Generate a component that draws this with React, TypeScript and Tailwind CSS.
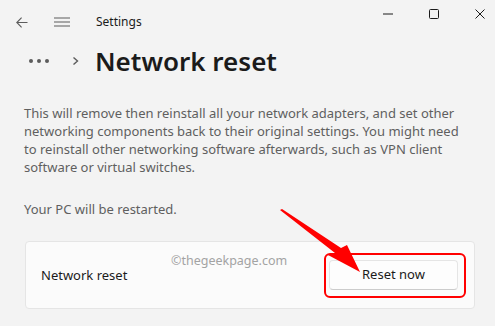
import React from "react";

export default function App() {
  return (
    <div
      className="relative w-[495px] h-[326px] overflow-hidden bg-[#f3f3f3] text-[#1b1b1b]"
      style={{ fontFamily: '"Segoe UI", "Noto Sans", sans-serif' }}
    >
      {/* title bar */}
      <div className="flex h-[44px] justify-between">
        <div className="flex items-center">
          <div className="ml-[16px] w-[12px] flex items-center">
            <svg width="12" height="11" viewBox="0 0 12 11" fill="none" stroke="#5c5c5c" strokeWidth="1.1">
              <path d="M11.5 5.5H0.8M5.6 0.6L0.8 5.5L5.6 10.4" />
            </svg>
          </div>
          <div className="ml-[26px] w-[16px]">
            <svg width="16" height="10" viewBox="0 0 16 10" fill="none" stroke="#5c5c5c" strokeWidth="1.1">
              <path d="M0 1H16M0 5H16M0 9H16" />
            </svg>
          </div>
          <span className="ml-[26px] text-[12px] text-[#1b1b1b]">Settings</span>
        </div>
        <div className="flex h-[28px] items-center mr-[-8px]">
          <div className="w-[46px] flex justify-center">
            <svg width="10" height="2" viewBox="0 0 10 2"><path d="M0 1H10" stroke="#1b1b1b" strokeWidth="1" /></svg>
          </div>
          <div className="w-[46px] flex justify-center">
            <svg width="10" height="10" viewBox="0 0 10 10" fill="none"><rect x="0.5" y="0.5" width="9" height="9" rx="1" stroke="#1b1b1b" strokeWidth="1" /></svg>
          </div>
          <div className="w-[46px] flex justify-center">
            <svg width="10" height="10" viewBox="0 0 10 10" fill="none"><path d="M0.5 0.5L9.5 9.5M9.5 0.5L0.5 9.5" stroke="#1b1b1b" strokeWidth="1" /></svg>
          </div>
        </div>
      </div>

      {/* breadcrumb */}
      <div className="flex items-center h-[36px] mt-[-1px]">
        <div className="ml-[29px] flex gap-[4px]">
          <span className="w-[4px] h-[4px] rounded-full bg-[#5c5c5c]" />
          <span className="w-[4px] h-[4px] rounded-full bg-[#5c5c5c]" />
          <span className="w-[4px] h-[4px] rounded-full bg-[#5c5c5c]" />
        </div>
        <svg className="ml-[23px]" width="7" height="8" viewBox="0 0 7 8" fill="none" stroke="#5c5c5c" strokeWidth="1.4">
          <path d="M1.5 0.5L5.5 4L1.5 7.5" />
        </svg>
        <h1 className="ml-[16px] text-[26px] font-semibold text-[#1b1b1b] leading-none">Network reset</h1>
      </div>

      {/* paragraph */}
      <div className="ml-[24px] mt-[25px] text-[13px] leading-[18px] text-[#5f5f5f]">
        <div>This will remove then reinstall all your network adapters, and set other</div>
        <div>networking components back to their original settings. You might need</div>
        <div>to reinstall other networking software afterwards, such as VPN client</div>
        <div>software or virtual switches.</div>
        <div className="mt-[24px]">Your PC will be restarted.</div>
      </div>

      {/* card */}
      <div className="relative ml-[25px] mt-[23px] w-[450px] h-[68px] rounded-[4px] border border-[#e5e5e5] bg-[#fbfbfb] flex items-center justify-between pl-[15px] pr-[16px]">
        <span className="text-[13px] text-[#1b1b1b] mt-[2px]">Network reset</span>
        <div className="relative">
          <div className="w-[129px] h-[30px] rounded-[4px] border border-[#e5e5e5] border-b-[#cccccc] bg-[#fdfdfd] flex items-center justify-center text-[13px] text-[#1b1b1b]">
            Reset now
          </div>
          <div className="absolute left-[-5px] top-[-7px] w-[142px] h-[45px] rounded-[6px] border-2 border-[#ff0000]" />
        </div>
        <span className="absolute left-[145px] top-[10px] text-[12.5px] text-[#a3a3a3]">©thegeekpage.com</span>
      </div>

      {/* arrow */}
      <svg className="absolute left-0 top-0 pointer-events-none" width="495" height="326" viewBox="0 0 495 326">
        <polygon points="280,210 282,209 341,248 347,245 360,272 328,255 335,253" fill="#ff0000" />
      </svg>
    </div>
  );
}
